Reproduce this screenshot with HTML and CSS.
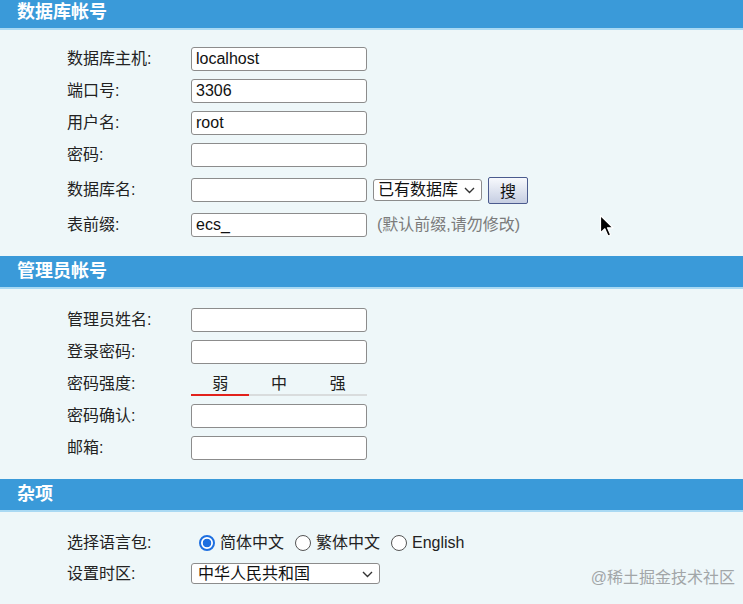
FILE: index.html
```html
<!DOCTYPE html>
<html lang="zh-CN">
    <head>
        <meta charset="utf-8"/>
        <title>安装配置</title>
        <link rel="stylesheet" href="styles.css">
    </head>
    <body>
        <div class="page">
            <div class="sec-title first">数据库帐号</div>
            <div class="sec-body first-body">
                <div class="row"><span class="lbl">数据库主机:</span><input class="txt" type="text" value="localhost"></div>
                <div class="row"><span class="lbl">端口号:</span><input class="txt" type="text" value="3306"></div>
                <div class="row"><span class="lbl">用户名:</span><input class="txt" type="text" value="root"></div>
                <div class="row"><span class="lbl">密码:</span><input class="txt" type="password"></div>
                <div class="row row-db">
                    <span class="lbl">数据库名:</span><input class="txt" type="text">
                    <span class="sel-wrap sel-db">
                        <select><option>已有数据库</option></select>
                        <svg class="chev" width="11" height="7" viewBox="0 0 11 7"><path d="M1 1 L5.5 5.5 L10 1" fill="none" stroke="#333" stroke-width="1.4"/></svg>
                    </span>
                    <button class="search-btn">搜</button>
                </div>
                <div class="row"><span class="lbl">表前缀:</span><input class="txt" type="text" value="ecs_"><span class="hint">(默认前缀,请勿修改)</span></div>
            </div>

            <div class="sec-title">管理员帐号</div>
            <div class="sec-body">
                <div class="row"><span class="lbl">管理员姓名:</span><input class="txt" type="text"></div>
                <div class="row"><span class="lbl">登录密码:</span><input class="txt" type="password"></div>
                <div class="row row-strength">
                    <span class="lbl">密码强度:</span>
                    <div class="strength">
                        <div class="levels"><span>弱</span><span>中</span><span>强</span></div>
                        <div class="bar"></div>
                    </div>
                </div>
                <div class="row"><span class="lbl">密码确认:</span><input class="txt" type="password"></div>
                <div class="row"><span class="lbl">邮箱:</span><input class="txt" type="text"></div>
            </div>

            <div class="sec-title">杂项</div>
            <div class="sec-body">
                <div class="row">
                    <span class="lbl">选择语言包:</span>
                    <label class="lang"><input type="radio" name="lang" checked><span>简体中文</span></label>
                    <label class="lang"><input type="radio" name="lang"><span>繁体中文</span></label>
                    <label class="lang"><input type="radio" name="lang"><span>English</span></label>
                </div>
                <div class="row row-tz">
                    <span class="lbl">设置时区:</span>
                    <span class="sel-wrap sel-tz">
                        <select><option>中华人民共和国</option></select>
                        <svg class="chev" width="11" height="7" viewBox="0 0 11 7"><path d="M1 1 L5.5 5.5 L10 1" fill="none" stroke="#333" stroke-width="1.4"/></svg>
                    </span>
                </div>
            </div>
        </div>

        <svg class="cursor" width="16" height="26" viewBox="0 0 16 26">
            <path d="M1.5 1.5 L1.5 19 L5.8 14.8 L9 22 L11.6 20.8 L8.5 13.8 L14 13.8 Z" fill="#000" stroke="#fff" stroke-width="1.2" stroke-linejoin="round"/>
        </svg>
        <div class="watermark">@稀土掘金技术社区</div>
    </body>
</html>
```

FILE: styles.css
```css
body {
    margin: 0;
    background: #eef7f9;
    color: #222;
    font-family: "Liberation Sans", "Noto Sans CJK SC", sans-serif;
    font-size: 16px;
}
.page { margin-top: -3px; }

.sec-title {
    height: 31px; line-height: 31px;
    padding-left: 17px;
    background: #3a9ad9; color: #fff;
    font-size: 18px; font-weight: bold;
    border-bottom: 2px solid #a9d9f3;
}

.sec-body {
    display: flex; flex-direction: column; gap: 8px;
    padding: 19px 0 19px 67px;
}
.first-body { padding-top: 17px; }
.row { display: flex; align-items: center; min-height: 24px; }
.row-db { height: 30px; }
.row-strength { height: 23px; }
.row-tz { min-height: 21px; }
.lbl { width: 124px; flex-shrink: 0; line-height: 20px; }

.txt {
    box-sizing: border-box;
    width: 176px; height: 24px;
    margin: 0; padding: 0 4px;
    border: 1px solid #8c8c8c; border-radius: 3px;
    background: #fff;
    font: 16px "Liberation Sans", "Noto Sans CJK SC", sans-serif;
    color: #111;
}

.sel-wrap { position: relative; display: inline-block; }
.sel-wrap select {
    appearance: none; -webkit-appearance: none;
    box-sizing: border-box;
    margin: 0; padding: 0 22px 0 4px;
    border: 1px solid #8c8c8c; border-radius: 3px;
    background: #fff; color: #111;
    font: 16px "Liberation Sans", "Noto Sans CJK SC", sans-serif;
    line-height: 20px;
}
.sel-wrap .chev { position: absolute; right: 7px; top: 50%; margin-top: -3px; pointer-events: none; }
.sel-db { margin-left: 6px; }
.sel-db select { width: 109px; height: 22px; }
.sel-tz select { width: 189px; height: 21px; padding-left: 6px; }

.search-btn {
    box-sizing: border-box;
    margin-left: 6px;
    width: 40px; height: 27px;
    border: 1px solid #4b5b8e; border-radius: 2px;
    background: linear-gradient(#f7f9fd, #c6cee2);
    font: 16px "Liberation Sans", "Noto Sans CJK SC", sans-serif;
    color: #111; padding: 0;
}

.hint { margin-left: 10px; color: #7b7b7b; line-height: 20px; }

.strength { width: 176px; display: flex; flex-direction: column; }
.levels { display: flex; line-height: 21px; color: #222; }
.levels span { flex: 1; text-align: center; }
.bar { height: 2px; background: linear-gradient(to right, #e2211c 0, #e2211c 33%, #d9dcdd 33%, #d9dcdd 100%); }

.lang { display: flex; align-items: center; margin-left: 11px; line-height: 24px; }
.lang:first-of-type { margin-left: 8px; }
.lang input {
    appearance: none; -webkit-appearance: none;
    box-sizing: border-box;
    width: 16px; height: 16px; margin: 0 5px 0 0;
    border: 1px solid #555; border-radius: 50%;
    background: #fff;
}
.lang input:checked {
    border: 2px solid #1d6fe0;
    background: radial-gradient(circle, #1d6fe0 0, #1d6fe0 4px, #fff 4.6px);
}

.cursor { position: absolute; left: 599px; top: 214px; }
.watermark {
    position: absolute; right: 8px; top: 568px;
    line-height: 20px; font-size: 16px;
    color: #a2a6a8;
}
```
